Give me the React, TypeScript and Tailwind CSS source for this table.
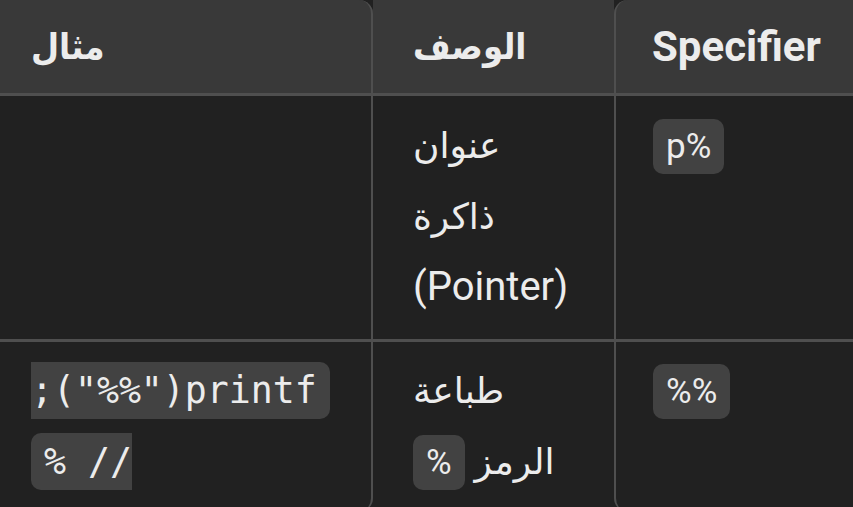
import React from 'react';

const sans = { fontFamily: 'Roboto, "Noto Sans", "DejaVu Sans", sans-serif' };

const Chip = ({ children, mono }: { children: React.ReactNode; mono?: boolean }) => (
    <code
        className={`bg-[#424242] rounded-[10px] py-[7px] px-[13px] ${mono ? "text-[36.5px] font-['DejaVu_Sans_Mono',monospace]" : "text-[35px] font-['Roboto',sans-serif]"}`}
    >
        {children}
    </code>
);

// arabic words come out wide in the fallback font, so they get a smaller size
const Ar = ({ children }: { children: React.ReactNode }) => <span className='text-[36px]'>{children}</span>;
const ArHead = ({ children }: { children: React.ReactNode }) => (
    <span className="text-[36px] font-['DejaVu_Sans_Condensed','DejaVu_Sans',sans-serif]">{children}</span>
);

const App = () => {
    return (
        <div className='w-[853px] h-[507px] overflow-hidden bg-[#212121] text-[#ececec]' style={sans}>
            <table dir='rtl' className='w-[853px] table-fixed border-separate border-spacing-0 text-left text-[40px] leading-[70px]'>
                <colgroup>
                    <col className='w-[239px]' />
                    <col className='w-[241px]' />
                    <col className='w-[373px]' />
                </colgroup>
                <thead>
                    <tr className='bg-[#393939] h-[96px]'>
                        <th className='text-left text-[42px] font-bold pl-[36px] pr-[10px] border-l-2 border-b-[3px] border-[#4f4f4f] rounded-tl-[14px] align-middle'>
                            Specifier
                        </th>
                        <th className='text-left font-bold pl-[40px] pr-[20px] border-b-[3px] border-[#4f4f4f] align-middle'>
                            <ArHead>الوصف</ArHead>
                        </th>
                        <th className='text-left font-bold pl-[31px] pr-[39px] border-r-2 border-b-[3px] border-[#4f4f4f] rounded-tr-[14px] align-middle'>
                            <ArHead>مثال</ArHead>
                        </th>
                    </tr>
                </thead>
                <tbody>
                    {/* %p row */}
                    <tr>
                        <td className='align-top pt-[14px] pb-[17px] pl-[37px] pr-[20px] border-l-2 border-b-[3px] border-[#4f4f4f]'>
                            <Chip>%p</Chip>
                        </td>
                        <td className='align-top pt-[14px] pb-[17px] pl-[40px] pr-[38px] border-b-[3px] border-[#4f4f4f]'>
                            <Ar>عنوان</Ar> <Ar>ذاكرة</Ar> (Pointer)
                        </td>
                        <td className='align-top pt-[14px] pb-[17px] pl-[31px] pr-[39px] border-r-2 border-b-[3px] border-[#4f4f4f]'></td>
                    </tr>
                    {/* %% row */}
                    <tr>
                        <td className='align-top pt-[13px] pb-[14px] pl-[37px] pr-[20px] border-l-2 border-[#4f4f4f] rounded-bl-[14px]'>
                            <Chip>%%</Chip>
                        </td>
                        <td className='align-top pt-[13px] pb-[14px] pl-[40px] pr-[38px]'>
                            <Ar>طباعة</Ar> <Ar>الرمز</Ar> <Chip>%</Chip>
                        </td>
                        <td className='align-top pt-[13px] pb-[14px] pl-[31px] pr-[34px] border-r-2 border-[#4f4f4f] rounded-br-[14px]'>
                            <Chip mono>printf("%%"); // %</Chip>
                        </td>
                    </tr>
                </tbody>
            </table>
        </div>
    );
};

export default App;
